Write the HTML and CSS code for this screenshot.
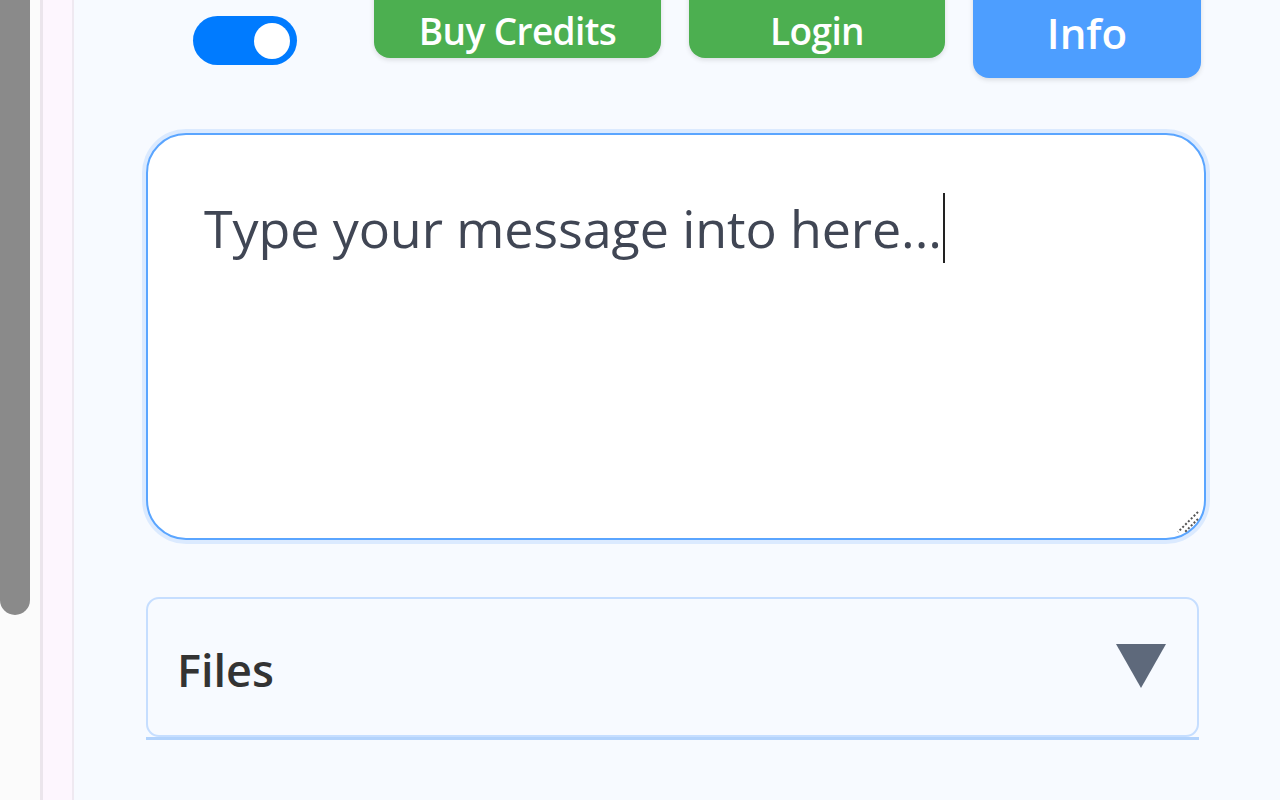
FILE: index.html
```html
<!DOCTYPE html>
<html lang="en">
<head>
  <meta charset="UTF-8" />
  <meta name="viewport" content="width=device-width, initial-scale=1.0"/>
  <title>Chat Panel</title>
  <link rel="stylesheet" href="styles.css">
</head>
<body>
  <div class="scroll-strip">
    <div class="scroll-thumb"></div>
  </div>
  <div class="rail"></div>

  <main class="panel">
    <div class="toolbar">
      <div class="toggle" id="modeToggle"><span class="knob"></span></div>
      <button class="btn btn-green btn-credits">Buy Credits</button>
      <button class="btn btn-green btn-login">Login</button>
      <button class="btn btn-blue btn-info">Info</button>
    </div>

    <div class="message-box">
      <div class="message-text">Type your message into here...<span class="caret"></span></div>
      <svg class="grip" width="28" height="28" viewBox="0 0 28 28">
        <path d="M26 6 L6 26 M26 13 L13 26" stroke="#555" stroke-width="2" stroke-dasharray="2 2" fill="none"/>
      </svg>
    </div>

    <div class="files">
      <div class="files-head">
        <span class="files-title">Files</span>
        <svg class="files-arrow" width="50" height="44" viewBox="0 0 50 44">
          <polygon points="0,0 50,0 25,44" fill="#5e697b"/>
        </svg>
      </div>
    </div>
  </main>
</body>
</html>
```

FILE: styles.css
```css
:root {
  --panel-bg: #f7faff;
  --green: #4caf50;
  --blue: #4d9eff;
  --toggle-blue: #007bff;
  --text: #404654;
}

html, body {
  margin: 0;
  height: 100%;
}

body {
  display: flex;
  overflow: hidden;
  font-family: "Open Sans", "Noto Sans", sans-serif;
  background: var(--panel-bg);
}

.scroll-strip {
  width: 40px;
  background: #fbfbfb;
  flex-shrink: 0;
}

.scroll-thumb {
  width: 30px;
  height: 615px;
  background: #8a8a8a;
  border-radius: 0 0 15px 15px;
}

.rail {
  width: 29px;
  flex-shrink: 0;
  background: #fdf6fe;
  border-left: 3px solid #ebe5ec;
  border-right: 2px solid #efe9f1;
}

.panel {
  flex: 1;
  padding-left: 72px;
}

.toolbar {
  display: flex;
  align-items: flex-start;
  margin-top: -20px;
}

.toggle {
  width: 104px;
  height: 49px;
  margin-top: 36px;
  margin-left: 47px;
  margin-right: 77px;
  border-radius: 25px;
  background: var(--toggle-blue);
  display: flex;
  align-items: center;
  justify-content: flex-end;
  padding-right: 7px;
  box-sizing: border-box;
}

.knob {
  width: 36px;
  height: 36px;
  border-radius: 50%;
  background: #fff;
}

.btn {
  border: none;
  color: #fff;
  font-family: inherit;
  cursor: pointer;
  border-radius: 16px;
  box-shadow: 0 2px 5px rgba(0, 0, 0, 0.12);
  box-sizing: border-box;
  padding: 0;
}

.btn-green {
  background: var(--green);
  height: 78px;
  font-size: 37px;
  font-weight: 600;
  letter-spacing: -0.6px;
  line-height: 50px;
  padding-top: 23px;
}

.btn-blue {
  background: var(--blue);
  height: 98px;
  font-size: 42px;
  font-weight: 600;
  line-height: 56px;
  padding-top: 7px;
}

.btn-credits { width: 287px; }
.btn-login { width: 256px; margin-left: 28px; }
.btn-info { width: 228px; margin-left: 28px; }

.message-box {
  position: relative;
  width: 1060px;
  height: 407px;
  margin-top: 55px;
  box-sizing: border-box;
  background: #fff;
  border: 2px solid #5aa5ff;
  border-radius: 40px;
  box-shadow: 0 0 0 4px rgba(77, 158, 255, 0.16);
  padding: 58px 56px 0;
}

.message-text {
  font-size: 52px;
  line-height: 70px;
  color: var(--text);
  letter-spacing: -0.1px;
}

.caret {
  display: inline-block;
  width: 2px;
  height: 70px;
  background: #222;
  vertical-align: top;
  margin-left: 1px;
}

.grip {
  position: absolute;
  right: 4px;
  bottom: 4px;
}

.files {
  width: 1053px;
  margin-top: 57px;
  border-bottom: 3px solid #b3d3fc;
}

.files-head {
  height: 140px;
  box-sizing: border-box;
  border: 2px solid #c6deff;
  border-radius: 13px;
  display: flex;
  align-items: center;
  justify-content: space-between;
  padding: 0 31px 0 29px;
}

.files-title {
  font-size: 45px;
  font-weight: 600;
  color: #333;
  margin-top: 4px;
}

.files-arrow {
  margin-top: -2px;
}
```
